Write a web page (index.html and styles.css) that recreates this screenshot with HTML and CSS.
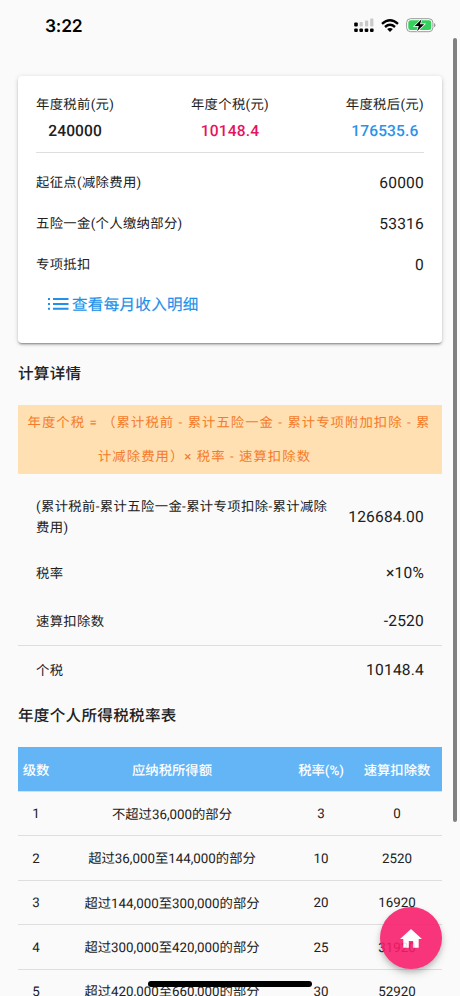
FILE: index.html
```html
<!DOCTYPE html>
<html lang="zh-CN">
<head>
<meta charset="utf-8">
<title>年度个税</title>
<link rel="stylesheet" href="styles.css">
</head>
<body>
<div class="screen">
  <header class="status">
    <span class="time">3:22</span>
    <div class="status-icons">
      <svg class="signal" width="20" height="15" viewBox="0 0 20 15">
        <g fill="#c9c9c9"><rect x="5.6" y="4" width="3.2" height="4.6" rx=".8"/><rect x="11" y="2.4" width="3.2" height="6.2" rx=".8"/><rect x="16.2" y=".6" width="3.2" height="8" rx=".8"/></g>
        <g fill="#000"><rect x=".2" y="4.6" width="3.6" height="4" rx="1"/><rect x=".2" y="10.4" width="3.6" height="3.6" rx="1.1"/><rect x="5.4" y="10.4" width="3.6" height="3.6" rx="1.1"/><rect x="10.7" y="10.4" width="3.6" height="3.6" rx="1.1"/><rect x="16" y="10.4" width="3.6" height="3.6" rx="1.1"/></g>
      </svg>
      <svg class="wifi" width="18" height="13" viewBox="0 0 18 13">
        <g fill="none" stroke="#000" stroke-width="2.4"><path d="M1 4.8Q9-2.1 17 4.8"/><path d="M4 8Q9 3.7 14 8"/></g>
        <path d="M6.1 10.1Q9 7.8 11.9 10.1L9 13Z"/>
      </svg>
      <svg class="battery" width="30" height="15" viewBox="0 0 30 15">
        <rect x=".6" y=".7" width="26.3" height="13" rx="4" fill="#fff" stroke="#999" stroke-width="1"/>
        <rect x="2.3" y="2.3" width="23" height="9.8" rx="2.4" fill="#34cf5c"/>
        <path d="M28 5v4.3q1.4-.6 1.4-2.15T28 5Z" fill="#999"/>
        <path d="M15.6 1.3 8.7 8.1H12.8L11 13.2 18.2 6.3H14Z" fill="#000" stroke="#fff" stroke-width="1.5" paint-order="stroke"/>
      </svg>
    </div>
  </header>

  <main class="content">
    <section class="card">
      <div class="summary">
        <div class="stat"><span class="label">年度税前(元)</span><b class="amount">240000</b></div>
        <div class="stat"><span class="label">年度个税(元)</span><b class="amount pink">10148.4</b></div>
        <div class="stat"><span class="label">年度税后(元)</span><b class="amount blue">176535.6</b></div>
      </div>
      <div class="row"><span class="label">起征点(减除费用)</span><span class="value">60000</span></div>
      <div class="row"><span class="label">五险一金(个人缴纳部分)</span><span class="value">53316</span></div>
      <div class="row"><span class="label">专项抵扣</span><span class="value">0</span></div>
      <a class="link">
        <svg width="21" height="12" viewBox="0 0 21 12" fill="#2090e8"><path d="M0 0h2v2H0zM5 0h15.5v2H5zM0 4.9h2v2H0zM5 4.9h15.5v2H5zM0 9.8h2v2H0zM5 9.8h15.5v2H5z"/></svg>
        <span>查看每月收入明细</span>
      </a>
    </section>

    <h2 class="title">计算详情</h2>
    <p class="formula"><span>年度个税 = （累计税前 - 累计五险一金 - 累计专项附加扣除 - 累</span><span class="rest">计减除费用）× 税率 - 速算扣除数</span></p>
    <section class="details">
      <div class="row tall"><span class="label wide">(累计税前-累计五险一金-累计专项扣除-累计减除<br>费用)</span><span class="value">126684.00</span></div>
      <div class="row"><span class="label">税率</span><span class="value">×10%</span></div>
      <div class="row"><span class="label">速算扣除数</span><span class="value">-2520</span></div>
      <div class="row total"><span class="label">个税</span><span class="value">10148.4</span></div>
    </section>

    <h2 class="title second">年度个人所得税税率表</h2>
    <div class="rates">
      <div class="rate head"><span>级数</span><span>应纳税所得额</span><span>税率(%)</span><span>速算扣除数</span></div>
      <div class="rate"><span>1</span><span class="range">不超过36,000的部分</span><span>3</span><span>0</span></div>
      <div class="rate"><span>2</span><span class="range">超过36,000至144,000的部分</span><span>10</span><span>2520</span></div>
      <div class="rate"><span>3</span><span class="range">超过144,000至300,000的部分</span><span>20</span><span>16920</span></div>
      <div class="rate"><span>4</span><span class="range">超过300,000至420,000的部分</span><span>25</span><span>31920</span></div>
      <div class="rate"><span>5</span><span class="range">超过420,000至660,000的部分</span><span>30</span><span>52920</span></div>
    </div>
  </main>

  <div class="scrollbar"></div>
  <div class="fab">
    <svg width="22" height="19" viewBox="2 3 20 17.3" fill="#fff"><path d="M10 20v-6h4v6h5v-8h3L12 3 2 12h3v8z"/></svg>
  </div>
  <div class="home-bar"></div>
</div>
</body>
</html>
```
FILE: styles.css
```css
* { box-sizing: border-box; }
html, body { margin: 0; height: 996px; overflow: hidden; }
body {
  background: #fafafa;
  color: #212121;
  font-family: Roboto, "Noto Sans CJK SC", sans-serif;
  font-size: 13.33px;
  text-rendering: geometricPrecision;
}
.screen { position: relative; height: 996px; overflow: hidden; }

.status {
  height: 76px;
  padding: 16px 24px 0 45px;
  display: flex;
  justify-content: space-between;
  align-items: flex-start;
}
.time { font: 600 17.4px/20px Inter, sans-serif; color: #000; letter-spacing: -.2px; padding-top: 1px; }
.status-icons { display: flex; align-items: flex-start; }
.signal { margin: 2px -1px 0 0; }
.wifi { margin: 3px 7px 0 8px; }
.battery { margin-top: 2px; }

.content { padding: 0 18px; }
.card {
  height: 267px;
  padding: 18px 18px 0;
  background: #fff;
  border-radius: 4px;
  box-shadow: 0 2px 2px rgba(0,0,0,.16), 0 1px 5px rgba(0,0,0,.16), 0 2px 1px -1px rgba(0,0,0,.2);
}
.summary {
  height: 59px;
  display: flex;
  justify-content: space-between;
  border-bottom: 1px solid #dedede;
  margin-bottom: 9px;
}
.stat { display: flex; flex-direction: column; align-items: center; }
.label { line-height: 21px; letter-spacing: .34px; white-space: nowrap; padding-top: 2px; }
.label.wide { letter-spacing: .38px; }
.stat .label { padding-top: 1px; }
.amount {
  font-size: 15.56px;
  font-weight: 500;
  line-height: 31px;
  letter-spacing: .15px;
}
.pink { color: #e6135f; }
.blue { color: #2b92ea; }
.row {
  height: 41px;
  display: flex;
  align-items: center;
  justify-content: space-between;
}
.value { font-size: 15.56px; letter-spacing: .2px; line-height: 20px; padding-top: 1px; }
.details .value { padding-top: 0; }
.link {
  display: flex;
  align-items: center;
  gap: 3px;
  margin: 2px 0 0 12px;
  height: 33px;
  color: #2090e8;
  font-size: 15.56px;
  letter-spacing: .28px;
  -webkit-text-stroke: .15px currentColor;
}
.link svg { margin-top: 1px; }
.title {
  margin: 19px 0 19px;
  font-size: 15.56px;
  font-weight: 500;
  line-height: 24px;
  letter-spacing: .32px;
}
.formula {
  margin: 0;
  height: 69px;
  padding-top: 2px;
  background: #ffe0b2;
  border-radius: 1px;
  color: #f47b2b;
  text-align: center;
  line-height: 34.4px;
  letter-spacing: 1.06px;
  white-space: nowrap;
}
.formula span { display: block; margin: 0 2px 0 0; }
.formula .rest { margin-right: 51px; }
.details { padding-top: 17px; }
.details .row { height: 48px; padding: 0 18px; }
.details .row.tall { height: 58px; padding-bottom: 7px; }
.details .row.total { height: 49px; border-top: 1px solid #dedede; }
.title.second { margin: 10px 0 19px; }

.rate {
  display: grid;
  grid-template-columns: 36px 236px 62px 90px;
  height: 44.44px;
  padding-top: 2px;
  align-items: center;
  text-align: center;
  border-bottom: 1px solid #dedede;
  white-space: nowrap;
}
.rate .range { margin-bottom: 3px; }
.rate.head { height: 45px; padding-top: 0; background: #64b5f6; color: #fff; font-weight: 500; }

.scrollbar {
  position: absolute;
  left: 453px;
  top: 38px;
  width: 3.5px;
  height: 784px;
  border-radius: 2px;
  background: #808080;
}
.fab {
  position: absolute;
  left: 380px;
  top: 907px;
  width: 62px;
  height: 62px;
  border-radius: 50%;
  display: flex;
  align-items: center;
  justify-content: center;
  background: #f81c6c;
  opacity: .89;
  box-shadow: 0 3px 5px rgba(0,0,0,.2), 0 5px 10px rgba(0,0,0,.12);
}
.home-bar {
  position: absolute;
  left: 148px;
  top: 981px;
  width: 164px;
  height: 5.5px;
  border-radius: 3px;
  background: #000;
}
```
